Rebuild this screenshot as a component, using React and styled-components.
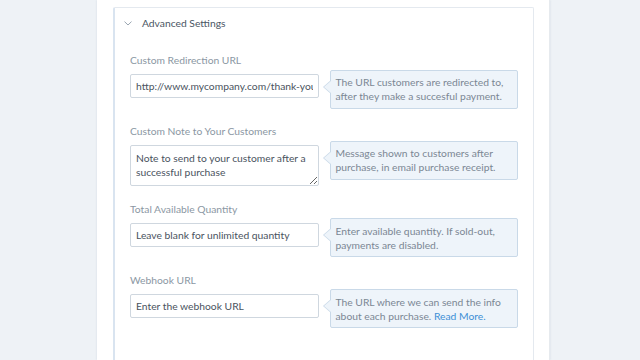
import React from "react";
import styled, { createGlobalStyle } from "styled-components";

const Global = createGlobalStyle`
  html, body { margin: 0; padding: 0; background: #eef2f6; }
  body { font-family: Lato, "Open Sans", "Liberation Sans", sans-serif; }
  * { box-sizing: border-box; }
`;

const Page = styled.div`
  display: flex;
  height: 360px;
  overflow: hidden;
`;

const Panel = styled.div`
  margin-left: 97px;
  width: 453px;
  background: #ffffff;
  padding: 7px 15px 0 16px;
  box-shadow: 0 0 2px rgba(160, 175, 190, 0.35);
  border-right: 1px solid #e6eaee;
`;

const Card = styled.section`
  border: 1px solid #e4e9ef;
  border-left: 2px solid #d9e4f0;
  border-bottom: none;
  border-radius: 2px 2px 0 0;
  padding: 0 15px 0 15px;
  height: 400px;
`;

const Header = styled.div`
  display: flex;
  align-items: center;
  height: 30px;
  margin-left: -6px;
  gap: 10px;
  font-size: 10.3px;
  color: #4a5563;
`;

const Fields = styled.div`
  padding-top: 15px;
  display: flex;
  flex-direction: column;
  gap: 15.5px;
`;

const Field = styled.div`
  display: flex;
  flex-direction: column;
`;

const Label = styled.div`
  font-size: 10.3px;
  line-height: 14px;
  color: #8b97a3;
  margin-bottom: 7px;
`;

const Row = styled.div`
  display: flex;
  align-items: flex-start;
  gap: 11px;
`;

const Input = styled.input`
  width: 189px;
  height: 24px;
  border: 1px solid #cfd7df;
  border-radius: 2px;
  padding: 0 5px;
  font-family: inherit;
  font-size: 10.3px;
  color: #4a5360;
  background: #fff;
  outline: none;
  &::placeholder { color: #4a5360; opacity: 1; }
`;

const TextArea = styled.textarea`
  width: 189px;
  height: 41px;
  border: 1px solid #cfd7df;
  border-radius: 2px;
  padding: 5px 5px;
  font-family: inherit;
  font-size: 10.3px;
  line-height: 14px;
  color: #4a5360;
  resize: both;
  outline: none;
  &::placeholder { color: #4a5360; opacity: 1; }
`;

const Tip = styled.div`
  position: relative;
  width: 189px;
  margin-top: -4.5px;
  background: #eef4fa;
  border: 1px solid #c9d9e8;
  border-radius: 2px;
  padding: 4.5px 5px;
  font-size: 10.3px;
  line-height: 14px;
  color: #7b8794;

  &::before, &::after {
    content: "";
    position: absolute;
    top: ${(p) => p.$arrow}px;
    width: 0;
    height: 0;
    border-style: solid;
  }
  &::before {
    left: -8px;
    border-width: 7px 8px 7px 0;
    border-color: transparent #c9d9e8 transparent transparent;
  }
  &::after {
    left: -6.5px;
    margin-top: 1px;
    border-width: 6px 7px 6px 0;
    border-color: transparent #eef4fa transparent transparent;
  }
`;

const Link = styled.a`
  color: #3d8fd6;
  text-decoration: none;
`;

const Chevron = () => (
  <svg width="8" height="5" viewBox="0 0 8 5" aria-hidden="true">
    <polyline points="0.5,0.6 4,4 7.5,0.6" fill="none" stroke="#9aa5b1" strokeWidth="1" />
  </svg>
);

export default function App() {
  return (
    <>
      <Global />
      <Page>
        <Panel>
          <Card>
            <Header>
              <Chevron />
              <span>Advanced Settings</span>
            </Header>
            <Fields>
              <Field>
                <Label>Custom Redirection URL</Label>
                <Row>
                  <Input defaultValue="http://www.mycompany.com/thank-you" />
                  <Tip $arrow={9}>The URL customers are redirected to, after they make a succesful payment.</Tip>
                </Row>
              </Field>
              <Field>
                <Label>Custom Note to Your Customers</Label>
                <Row>
                  <TextArea placeholder="Note to send to your customer after a successful purchase" />
                  <Tip $arrow={9}>Message shown to customers after purchase, in email purchase receipt.</Tip>
                </Row>
              </Field>
              <Field>
                <Label>Total Available Quantity</Label>
                <Row>
                  <Input placeholder="Leave blank for unlimited quantity" />
                  <Tip $arrow={9}>Enter available quantity. If sold-out, payments are disabled.</Tip>
                </Row>
              </Field>
              <Field>
                <Label>Webhook URL</Label>
                <Row>
                  <Input placeholder="Enter the webhook URL" />
                  <Tip $arrow={9}>
                    The URL where we can send the info about each purchase. <Link href="#">Read More.</Link>
                  </Tip>
                </Row>
              </Field>
            </Fields>
          </Card>
        </Panel>
      </Page>
    </>
  );
}
